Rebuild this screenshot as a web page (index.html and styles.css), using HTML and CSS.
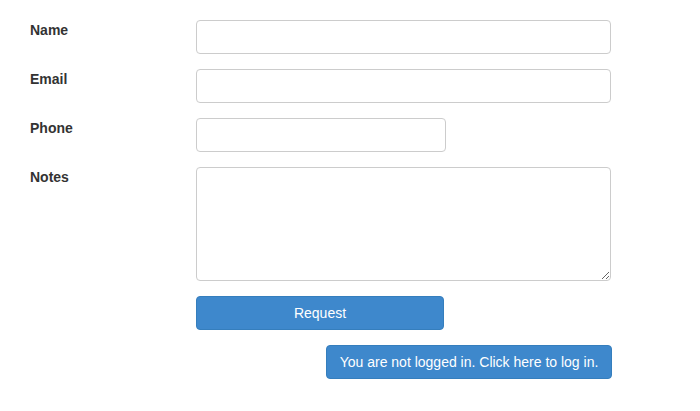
FILE: index.html
```html
<!DOCTYPE html>
<html>
<head>
<meta charset="utf-8">
<link rel="stylesheet" href="styles.css">
</head>
<body>
<form class="form">
  <div class="row">
    <label class="label">Name</label>
    <input class="control" type="text">
  </div>
  <div class="row">
    <label class="label">Email</label>
    <input class="control" type="text">
  </div>
  <div class="row">
    <label class="label">Phone</label>
    <input class="control control-short" type="text">
  </div>
  <div class="row">
    <label class="label">Notes</label>
    <textarea class="control control-area"></textarea>
  </div>
  <div class="row">
    <span></span>
    <button type="button" class="btn btn-request">Request</button>
  </div>
  <div class="row">
    <span></span>
    <div class="login-wrap">
      <button type="button" class="btn btn-login">You are not logged in. Click here to log in.</button>
    </div>
  </div>
</form>
</body>
</html>
```
FILE: styles.css
```css
html, body {
  margin: 0;
  padding: 0;
  background: #fff;
}
body {
  font-family: "Liberation Sans", Arial, sans-serif;
  font-size: 14px;
  line-height: 20px;
  color: #333;
}
.form {
  padding: 20px 0 0 30px;
  display: flex;
  flex-direction: column;
  gap: 15px;
}
.row {
  display: grid;
  grid-template-columns: 166px 415px;
  align-items: start;
}
.label {
  font-weight: bold;
  padding-top: 0;
  color: #333;
}
.control {
  box-sizing: border-box;
  width: 415px;
  height: 34px;
  border: 1px solid #ccc;
  border-radius: 4px;
  background: #fff;
  font-family: inherit;
  font-size: 14px;
  padding: 6px 12px;
  margin: 0;
  outline: none;
}
.control-short {
  width: 250px;
}
.control-area {
  height: 114px;
  resize: both;
  display: block;
}
.btn {
  box-sizing: border-box;
  height: 34px;
  margin: 0;
  border: 1px solid #357ebd;
  border-radius: 4px;
  background: #3e88cc;
  color: #fff;
  font-family: inherit;
  font-size: 14px;
  line-height: 20px;
  padding: 6px 12px;
}
.btn-request {
  width: 248px;
}
.login-wrap {
  display: flex;
  justify-content: flex-end;
  width: 416px;
}
.btn-login {
  width: 286px;
}
```
